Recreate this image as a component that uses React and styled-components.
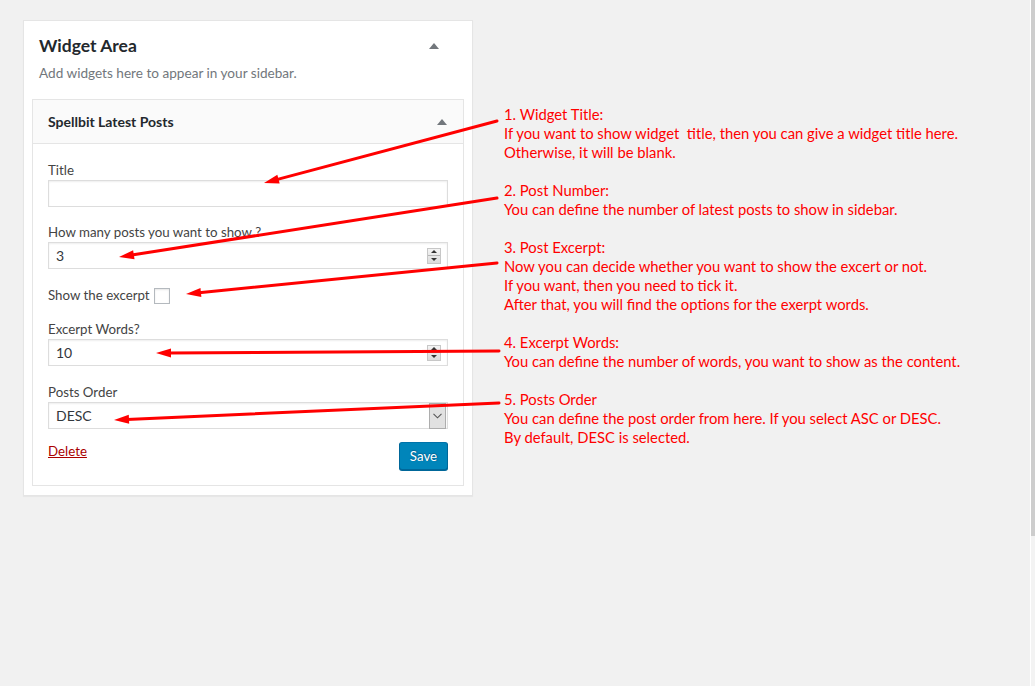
import React from 'react';
import styled, { createGlobalStyle } from 'styled-components';

const GlobalStyle = createGlobalStyle`
  html, body {
    margin: 0;
    padding: 0;
    background: #f1f1f1;
    font-family: Lato, "Liberation Sans", sans-serif;
    color: #444;
  }
  * { box-sizing: border-box; }
`;

const Page = styled.div`
  position: relative;
  display: flex;
  width: 100%;
  height: 686px;
  overflow: hidden;
`;

const Content = styled.div`
  flex: 1;
  display: flex;
  align-items: flex-start;
  gap: 31px;
  padding: 20px 0 0 23px;
`;

const ScrollEdge = styled.div`
  width: 5px;
  border-left: 1px solid #fff;
  background: linear-gradient(to bottom, #cdcdcd 0, #cdcdcd 536px, #f3f3f3 536px);
`;

const Sidebar = styled.div`
  width: 450px;
  background: #fff;
  border: 1px solid #e5e5e5;
  box-shadow: 0 1px 1px rgba(0, 0, 0, 0.04);
  padding: 14px 8px 9px;
`;

const SidebarHead = styled.div`
  display: flex;
  align-items: center;
  justify-content: space-between;
  padding: 0 25px 0 7px;
`;

const SidebarTitle = styled.h2`
  margin: 0;
  font-size: 17.5px;
  line-height: 22px;
  font-weight: 700;
  color: #23282d;
`;

const Toggle = styled.span`
  width: 0;
  height: 0;
  border-left: 5px solid transparent;
  border-right: 5px solid transparent;
  border-bottom: 6px solid #72777c;
  margin-top: ${(p) => p.$offset || 0}px;
`;

const Description = styled.p`
  margin: 7px 0 16px;
  padding: 0 7px;
  font-size: 13.6px;
  line-height: 19px;
  color: #72777c;
`;

const Widget = styled.div`
  border: 1px solid #e5e5e5;
  background: #fff;
`;

const WidgetTop = styled.div`
  display: flex;
  align-items: center;
  justify-content: space-between;
  height: 44px;
  padding: 0 16px 0 15px;
  background: #fafafa;
  border-bottom: 1px solid #e5e5e5;
`;

const WidgetName = styled.h3`
  margin: 0;
  font-size: 14px;
  font-weight: 700;
  color: #23282d;
`;

const WidgetBody = styled.div`
  display: flex;
  flex-direction: column;
  padding: 17px 15px 15px;
`;

const Field = styled.div`
  display: flex;
  flex-direction: column;
  margin-bottom: ${(p) => p.$space}px;
`;

const Label = styled.label`
  font-size: 13.3px;
  line-height: 19px;
  color: #444;
`;

const TextInput = styled.input`
  width: 100%;
  height: 27px;
  padding: 0 6px;
  border: 1px solid #ddd;
  box-shadow: inset 0 1px 2px rgba(0, 0, 0, 0.07);
  background: #fff;
  font-family: inherit;
  font-size: 14px;
  color: #32373c;
  outline: none;
`;

const Box = styled.div`
  display: flex;
  align-items: center;
  width: 100%;
  height: 27px;
  border: 1px solid #ddd;
  box-shadow: inset 0 1px 2px rgba(0, 0, 0, 0.07);
  background: #fff;
  padding: 0 ${(p) => p.$padRight || 0}px 0 0;
`;

const BareInput = styled.input`
  flex: 1;
  min-width: 0;
  height: 100%;
  padding: 0 7px;
  border: none;
  background: transparent;
  font-family: inherit;
  font-size: 14px;
  color: #32373c;
  outline: none;
  -moz-appearance: textfield;
  &::-webkit-inner-spin-button,
  &::-webkit-outer-spin-button {
    -webkit-appearance: none;
    margin: 0;
  }
`;

const Spinner = styled.div`
  display: flex;
  flex-direction: column;
  width: 14px;
  height: 16px;
  border: 1px solid #c7c7c7;
  background: linear-gradient(#f4f4f4, #dcdcdc);
`;

const SpinHalf = styled.span`
  flex: 1;
  display: flex;
  align-items: center;
  justify-content: center;
  & + & { border-top: 1px solid #b5b5b5; }
  &::before {
    content: '';
    border-left: 3px solid transparent;
    border-right: 3px solid transparent;
    ${(p) => (p.$down ? 'border-top: 3px solid #333;' : 'border-bottom: 3px solid #333;')}
  }
`;

const SelectBox = styled(Box)`
  padding: 0 1px 0 0;
`;

const Select = styled.select`
  flex: 1;
  height: 100%;
  border: none;
  background: transparent;
  appearance: none;
  -webkit-appearance: none;
  padding: 0 7px;
  font-family: inherit;
  font-size: 14px;
  color: #32373c;
  outline: none;
`;

const DropButton = styled.span`
  display: flex;
  align-items: center;
  justify-content: center;
  width: 17px;
  height: 26px;
  background: #e1e1e1;
  border: 1px solid #adadad;
`;

const CheckRow = styled.div`
  display: flex;
  align-items: center;
  height: 19px;
  margin-bottom: 15px;
`;

const Checkbox = styled.input`
  appearance: none;
  -webkit-appearance: none;
  width: 16px;
  height: 16px;
  margin: 0 0 0 4px;
  border: 1px solid #b4b9be;
  background: #fff;
  box-shadow: inset 0 1px 2px rgba(0, 0, 0, 0.1);
`;

const Actions = styled.div`
  display: flex;
  align-items: flex-start;
  justify-content: space-between;
`;

const DeleteLink = styled.a`
  margin-top: 0;
  font-size: 13.3px;
  line-height: 19px;
  color: #a00;
  text-decoration: underline;
`;

const SaveButton = styled.button`
  width: 49px;
  height: 28px;
  padding: 0 9px 1px;
  border: 1px solid #0073aa;
  border-color: #0073aa #006799 #006799;
  border-radius: 3px;
  background: #0085ba;
  box-shadow: 0 1px 0 #006799;
  color: #fff;
  font-family: inherit;
  font-size: 13.3px;
  text-shadow: 0 -1px 1px #006799, 1px 0 1px #006799;
`;

const Notes = styled.div`
  margin-top: 85px;
  color: #f00;
  font-family: Lato, "Liberation Sans", sans-serif;
  font-size: 14.8px;
  line-height: 19px;
`;

const Note = styled.p`
  margin: 0 0 19px;
`;

const Arrows = styled.svg`
  position: absolute;
  left: 0;
  top: 0;
  pointer-events: none;
`;

const arrows = [
  [497, 121, 264, 183],
  [497, 198, 119, 257],
  [497, 263, 186, 294],
  [499, 351, 156, 353],
  [499, 403, 114, 420],
];

const Arrow = ({ x1, y1, x2, y2 }) => {
  const len = Math.hypot(x2 - x1, y2 - y1);
  const ux = (x2 - x1) / len;
  const uy = (y2 - y1) / len;
  const bx = x2 - ux * 15;
  const by = y2 - uy * 15;
  const nx = -uy * 4.5;
  const ny = ux * 4.5;
  return (
    <g fill="#f00" stroke="#f00">
      <line x1={x1} y1={y1} x2={bx + ux * 2} y2={by + uy * 2} strokeWidth="3" strokeLinecap="round" />
      <polygon points={`${x2},${y2} ${bx + nx},${by + ny} ${bx - nx},${by - ny}`} stroke="none" />
    </g>
  );
};

const NumberField = ({ value }) => (
  <Box $padRight={6}>
    <BareInput type="number" defaultValue={value} />
    <Spinner>
      <SpinHalf />
      <SpinHalf $down />
    </Spinner>
  </Box>
);

export default function App() {
  return (
    <Page>
      <GlobalStyle />
      <Content>
        <Sidebar>
          <SidebarHead>
            <SidebarTitle>Widget Area</SidebarTitle>
            <Toggle $offset={-1} />
          </SidebarHead>
          <Description>Add widgets here to appear in your sidebar.</Description>
          <Widget>
            <WidgetTop>
              <WidgetName>Spellbit Latest Posts</WidgetName>
              <Toggle />
            </WidgetTop>
            <WidgetBody>
              <Field $space={16}>
                <Label>Title</Label>
                <TextInput type="text" />
              </Field>
              <Field $space={17}>
                <Label>How many posts you want to show ?</Label>
                <NumberField value={3} />
              </Field>
              <CheckRow>
                <Label>Show the excerpt</Label>
                <Checkbox type="checkbox" />
              </CheckRow>
              <Field $space={17}>
                <Label>Excerpt Words?</Label>
                <NumberField value={10} />
              </Field>
              <Field $space={13}>
                <Label>Posts Order</Label>
                <SelectBox>
                  <Select defaultValue="DESC">
                    <option>ASC</option>
                    <option>DESC</option>
                  </Select>
                  <DropButton>
                    <svg width="9" height="6" viewBox="0 0 9 6">
                      <path d="M0.5 0.8 L4.5 4.8 L8.5 0.8" fill="none" stroke="#555" strokeWidth="1.1" />
                    </svg>
                  </DropButton>
                </SelectBox>
              </Field>
              <Actions>
                <DeleteLink href="#">Delete</DeleteLink>
                <SaveButton>Save</SaveButton>
              </Actions>
            </WidgetBody>
          </Widget>
        </Sidebar>
        <Notes>
          <Note>
            1. Widget Title:<br />
            If you want to show widget&nbsp; title, then you can give a widget title here.<br />
            Otherwise, it will be blank.
          </Note>
          <Note>
            2. Post Number:<br />
            You can define the number of latest posts to show in sidebar.
          </Note>
          <Note>
            3. Post Excerpt:<br />
            Now you can decide whether you want to show the excert or not.<br />
            If you want, then you need to tick it.<br />
            After that, you will find the options for the exerpt words.
          </Note>
          <Note>
            4. Excerpt Words:<br />
            You can define the number of words, you want to show as the content.
          </Note>
          <Note>
            5. Posts Order<br />
            You can define the post order from here. If you select ASC or DESC.<br />
            By default, DESC is selected.
          </Note>
        </Notes>
      </Content>
      <ScrollEdge />
      <Arrows width="1035" height="686" viewBox="0 0 1035 686">
        {arrows.map(([x1, y1, x2, y2], i) => (
          <Arrow key={i} x1={x1} y1={y1} x2={x2} y2={y2} />
        ))}
      </Arrows>
    </Page>
  );
}
